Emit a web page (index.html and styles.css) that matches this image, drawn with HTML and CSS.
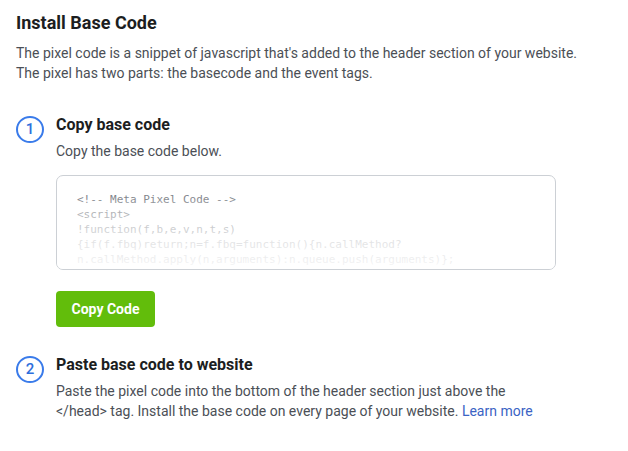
FILE: index.html
```html
<!DOCTYPE html>
<html>
<head>
<meta charset="utf-8">
<link rel="stylesheet" href="styles.css">
</head>
<body>
<div class="page">
  <h1 class="title">Install Base Code</h1>
  <p class="intro">The pixel code is a snippet of javascript that's added to the header section of your website. The pixel has two parts: the basecode and the event tags.</p>

  <div class="step step-one">
    <div class="num">1</div>
    <div class="step-body">
      <h2 class="step-title">Copy base code</h2>
      <p class="step-text">Copy the base code below.</p>
      <div class="code-box">
        <pre class="code">&lt;!-- Meta Pixel Code --&gt;
&lt;script&gt;
!function(f,b,e,v,n,t,s)
{if(f.fbq)return;n=f.fbq=function(){n.callMethod?
n.callMethod.apply(n,arguments):n.queue.push(arguments)};</pre>
        <div class="fade"></div>
      </div>
      <button class="copy-btn">Copy Code</button>
    </div>
  </div>

  <div class="step step-two">
    <div class="num">2</div>
    <div class="step-body">
      <h2 class="step-title">Paste base code to website</h2>
      <p class="step-text">Paste the pixel code into the bottom of the header section just above the &lt;/head&gt; tag. Install the base code on every page of your website. <a class="link" href="#">Learn more</a></p>
    </div>
  </div>
</div>
</body>
</html>
```
FILE: styles.css
```css
* { box-sizing: border-box; }
html, body { margin: 0; padding: 0; background: #fff; }
body { font-family: Roboto, "Liberation Sans", sans-serif; color: #4b4f56; }
.page { width: 628px; padding: 11px 16px 0 16px; }
.title {
  margin: 0;
  font-size: 18px;
  line-height: 24px;
  font-weight: 700;
  color: #1c1e21;
}
.intro {
  margin: 8px 0 0 0;
  font-size: 14px;
  line-height: 20px;
  width: 575px;
}
.step { display: flex; gap: 12px; align-items: flex-start; }
.step-one { margin-top: 32px; }
.step-two { margin-top: 28px; }
.num {
  flex: 0 0 28px;
  width: 28px;
  height: 27px;
  margin-top: 1px;
  border: 2px solid #3a7bea;
  border-radius: 50%;
  color: #2e6fdc;
  font-size: 15px;
  font-weight: 500;
  display: flex;
  align-items: center;
  justify-content: center;
  line-height: 1;
}
.step-body { flex: 1; }
.step-title {
  margin: 0;
  font-size: 16px;
  line-height: 20px;
  font-weight: 700;
  color: #1c1e21;
}
.step-text {
  margin: 6px 0 0 0;
  font-size: 14px;
  line-height: 20px;
  width: 490px;
}
.code-box {
  position: relative;
  margin-top: 14px;
  width: 500px;
  height: 95px;
  border: 1px solid #ccd0d5;
  border-radius: 7px;
  overflow: hidden;
  padding: 16px 0 0 20px;
}
.code {
  margin: 0;
  font-family: "DejaVu Sans Mono", "Liberation Mono", monospace;
  font-size: 11px;
  line-height: 15px;
  color: #6f737a;
}
.fade {
  position: absolute;
  left: 0; right: 0; top: 0; bottom: 0;
  background: linear-gradient(to bottom, rgba(255,255,255,0) 15%, rgba(255,255,255,0.5) 42%, rgba(255,255,255,0.8) 70%, rgba(255,255,255,0.93) 100%);
}
.copy-btn {
  display: block;
  margin-top: 21px;
  width: 99px;
  height: 36px;
  border: none;
  border-radius: 4px;
  background: #62bd0b;
  color: #fff;
  font-family: Roboto, "Liberation Sans", sans-serif;
  font-size: 14px;
  font-weight: 700;
  padding: 0;
}
.link { color: #3b63c4; text-decoration: none; }
```
